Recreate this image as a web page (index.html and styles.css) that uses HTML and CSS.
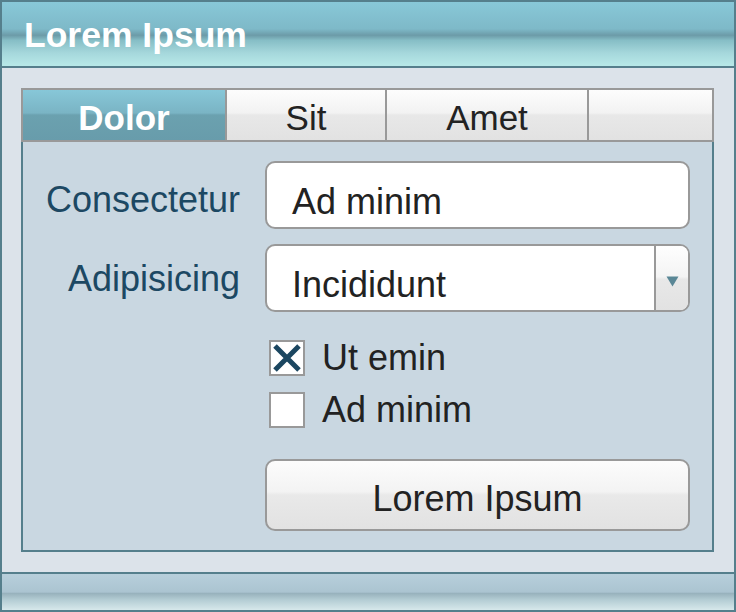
FILE: index.html
```html
<!DOCTYPE html>
<html>
<head>
<meta charset="utf-8">
<link rel="stylesheet" href="styles.css">
</head>
<body>
<div class="window">
  <div class="header">Lorem Ipsum</div>
  <div class="content">
    <div class="tabs">
      <div class="tab active" style="width:202px">Dolor</div>
      <div class="tab" style="width:158px">Sit</div>
      <div class="tab" style="width:200px">Amet</div>
      <div class="tab last"></div>
    </div>
    <div class="panel">
      <div class="form">
        <div class="label l1">Consectetur</div>
        <div class="field input">Ad minim</div>
        <div class="label l2">Adipisicing</div>
        <div class="field select">
          <span class="sel-text">Incididunt</span>
          <span class="sel-arrow"><svg width="13" height="11" viewBox="0 0 13 11"><polygon points="0.5,0.5 12.5,0.5 6.5,10.5" fill="#5a8796"/></svg></span>
        </div>
        <div class="spacer"></div>
        <div class="checks">
          <div class="check">
            <span class="box"><svg width="32" height="32" viewBox="0 0 32 32"><path d="M4 4 L28 28 M28 4 L4 28" stroke="#1b4660" stroke-width="5" fill="none"/></svg></span>
            <span class="ctext">Ut emin</span>
          </div>
          <div class="check c2">
            <span class="box"></span>
            <span class="ctext">Ad minim</span>
          </div>
        </div>
        <div class="spacer"></div>
        <div class="button">Lorem Ipsum</div>
      </div>
    </div>
  </div>
  <div class="footer"></div>
</div>
</body>
</html>
```
FILE: styles.css
```css
html, body {
  margin: 0;
  padding: 0;
}
body {
  font-family: "Liberation Sans", Arial, sans-serif;
}
.window {
  width: 736px;
  height: 612px;
  box-sizing: border-box;
  border: 2px solid #557f8c;
  display: flex;
  flex-direction: column;
  background: #dce3ea;
}
.header {
  border-bottom: 2px solid #557f8c;
  background: linear-gradient(#88c8d8 0%, #7eb9c8 42%, #6c9ba8 52%, #86bec6 60%, #a6d8dc 80%, #b8e9e8 100%);
  color: #fff;
  font-weight: bold;
  font-size: 35.5px;
  line-height: 40px;
  padding: 13px 0 0 22px;
  box-sizing: border-box;
  height: 66px;
}
.content {
  flex: 1;
  padding: 20px 20px 20px 19px;
  display: flex;
  flex-direction: column;
}
.tabs {
  display: flex;
  border: 2px solid #999;
  height: 50px;
}
.tab {
  box-sizing: content-box;
  height: 42px;
  border-right: 2px solid #999;
  background: linear-gradient(#fdfdfd 0%, #f2f2f2 46%, #e8e8e8 50%, #e2e2e2 100%);
  color: #222;
  font-size: 35px;
  line-height: 40px;
  padding-top: 8px;
  text-align: center;
  flex: none;
}
.tab.active {
  background: linear-gradient(#87c7d8 0%, #7ab4c4 46%, #6ba1af 50%, #689cab 100%);
  color: #fff;
  font-weight: bold;
}
.tab.last {
  flex: 1;
  border-right: none;
}
.panel {
  flex: 1;
  background: #c9d7e1;
  border: 2px solid #557f8c;
  border-top: none;
}
.form {
  display: grid;
  grid-template-columns: 217px 425px;
  column-gap: 25px;
  padding-top: 19px;
}
.label {
  text-align: right;
  color: #1c4863;
  font-size: 36px;
  line-height: 40px;
}
.l1 { padding-top: 19px; }
.l2 { padding-top: 15px; }
.field {
  height: 68px;
  box-sizing: border-box;
  border: 2px solid #999;
  border-radius: 10px;
  background: #fff;
  color: #222;
  font-size: 36px;
  line-height: 40px;
}
.input {
  padding: 19px 0 0 25px;
  margin-bottom: 15px;
}
.select {
  display: flex;
  overflow: hidden;
}
.sel-text {
  flex: 1;
  padding: 19px 0 0 25px;
}
.sel-arrow {
  width: 32px;
  border-left: 2px solid #999;
  background: linear-gradient(#fefefe 0%, #f4f4f4 48%, #e8e8e8 52%, #e2e2e2 100%);
  display: flex;
  align-items: center;
  justify-content: center;
}
.sel-arrow svg {
  margin-top: 6px;
}
.spacer {
  grid-column: 1;
}
.checks {
  padding: 28px 0 0 4px;
}
.check {
  display: flex;
  align-items: center;
  height: 36px;
}
.check.c2 {
  margin-top: 16px;
}
.box {
  width: 32px;
  height: 32px;
  border: 2px solid #999;
  background: #fff;
  display: block;
}
.box svg {
  display: block;
}
.ctext {
  margin-left: 17px;
  font-size: 36px;
  line-height: 36px;
  color: #222;
}
.button {
  margin-top: 31px;
  height: 72px;
  box-sizing: border-box;
  border: 2px solid #999;
  border-radius: 10px;
  background: linear-gradient(#fcfcfc 0%, #f3f3f3 45%, #e9e9e9 50%, #e2e2e2 100%);
  color: #222;
  font-size: 36px;
  line-height: 40px;
  padding-top: 18px;
  text-align: center;
}
.footer {
  height: 36px;
  border-top: 2px solid #557f8c;
  background: linear-gradient(#b7cfdb 0%, #abc4d1 50%, #98b2bd 54%, #b4cdd4 72%, #d7e8eb 100%);
}
```
